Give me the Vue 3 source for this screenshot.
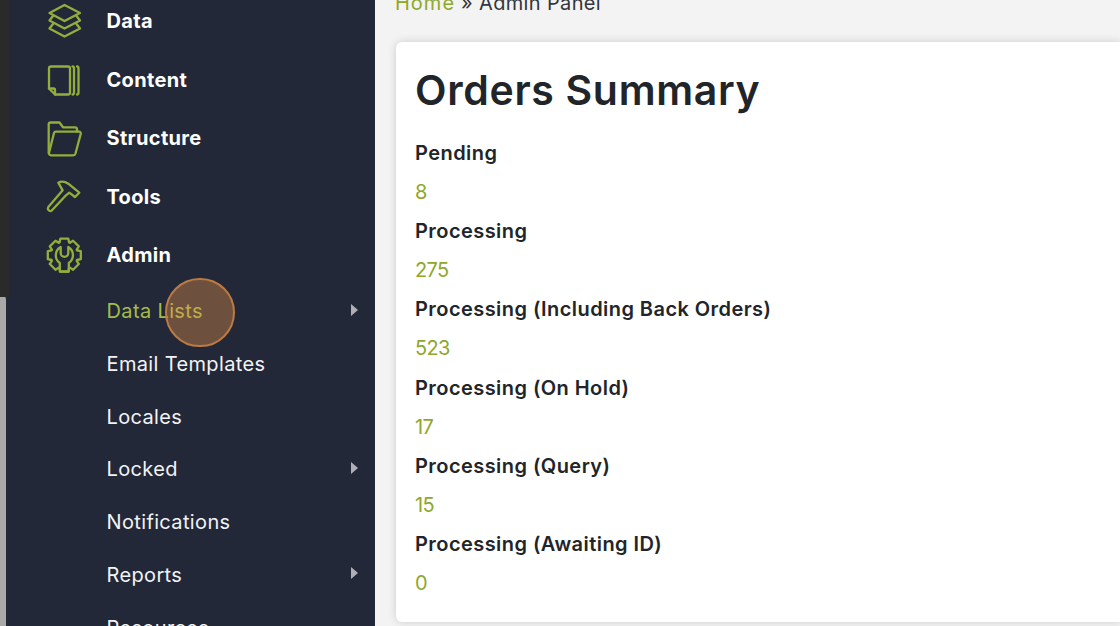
<script setup>
const mainItems = [
  { label: 'Data', icon: 'data' },
  { label: 'Content', icon: 'content' },
  { label: 'Structure', icon: 'structure' },
  { label: 'Tools', icon: 'tools' },
  { label: 'Admin', icon: 'admin' }
]
const subItems = [
  { label: 'Data Lists', arrow: true, active: true },
  { label: 'Email Templates' },
  { label: 'Locales' },
  { label: 'Locked', arrow: true },
  { label: 'Notifications' },
  { label: 'Reports', arrow: true },
  { label: 'Resources' }
]
const stats = [
  ['Pending', '8'],
  ['Processing', '275'],
  ['Processing (Including Back Orders)', '523'],
  ['Processing (On Hold)', '17'],
  ['Processing (Query)', '15'],
  ['Processing (Awaiting ID)', '0']
]
const gearPath = (() => {
  const cx = 20.3, cy = 20.2, ro = 17, ri = 13.6
  const pts = []
  for (let i = 0; i < 8; i++) {
    const a = (i * Math.PI) / 4 - Math.PI / 2
    const w = 0.24, v = 0.36
    for (const [r, d] of [[ri, -v], [ro, -w], [ro, w], [ri, v]]) {
      pts.push([cx + r * Math.cos(a + d), cy + r * Math.sin(a + d)])
    }
  }
  return 'M' + pts.map(p => p[0].toFixed(1) + ' ' + p[1].toFixed(1)).join(' L') + 'Z'
})()
</script>

<template>
  <div class="page">
    <div class="strip"><div class="thumb"></div></div>
    <aside class="sidebar">
      <div class="nav">
        <div v-for="m in mainItems" :key="m.label" class="main-item">
          <svg class="icon" viewBox="0 0 40 40" fill="none" stroke="#92ae3c" stroke-width="2.300" stroke-linejoin="round" stroke-linecap="round">
            <template v-if="m.icon === 'data'">
              <path d="M20.500 4 36 12 20.500 20 5.500 12Z" />
              <path d="M9 15 5.500 19.500 20.500 27.500 36 19.500 32.500 15" />
              <path d="M9 23 5.500 27.500 20.500 35.500 36 27.500 32.500 23" />
            </template>
            <template v-else-if="m.icon === 'content'">
              <path d="M7 6.500H24a2 2 0 0 1 2 2V32.500a2 2 0 0 1-2 2H11L5 28.500V8.500a2 2 0 0 1 2-2Z" />
              <path d="M5 28.500H9.500a1.500 1.500 0 0 1 1.500 1.500V34.500" />
              <path d="M28.500 6.500c1.200 0 1.500 1 1.500 2V32.500c0 1-.3 2-1.500 2" />
              <path d="M33 6.500c1.200 0 1.500 1 1.500 2V32.500c0 1-.3 2-1.500 2" />
            </template>
            <template v-else-if="m.icon === 'structure'">
              <path d="M4.700 35V6.500a2 2 0 0 1 2-2H15.500L19 9.300H31a2 2 0 0 1 2 2V13.500" />
              <path d="M12 13.600H35a1.800 1.800 0 0 1 1.700 2.400L31.500 35.500a2.500 2.500 0 0 1-2.400 1.800H7a2 2 0 0 1-2-2.400L10 15a2 2 0 0 1 2-1.400Z" />
            </template>
            <template v-else-if="m.icon === 'tools'">
              <path d="M14.300 5.700Q19 3 24.300 6.700L35.300 15.700 31 20 25.300 15.700 22 18.300 7.500 33.800A2.600 2.600 0 0 1 4.300 30L18.700 13.300Z" />
            </template>
            <template v-else>
              <path :d="gearPath" />
              <path d="M16.700 12V18a3.800 3.800 0 0 0 7.600 0V12A9.500 9.500 0 0 1 24.800 28V36.500H15.800V28A9.500 9.500 0 0 1 16.700 12Z" />
            </template>
          </svg>
          <span>{{ m.label }}</span>
        </div>
        <div class="subs">
          <div v-for="s in subItems" :key="s.label" class="sub-item" :class="{ active: s.active }">
            <span>{{ s.label }}</span>
            <i v-if="s.arrow" class="arrow"></i>
          </div>
        </div>
      </div>
      <div class="click"></div>
    </aside>
    <main class="content">
      <div class="crumbs"><span class="link">Home</span> » Admin Panel</div>
      <section class="card">
        <h1>Orders Summary</h1>
        <template v-for="s in stats" :key="s[0]">
          <div class="stat-label">{{ s[0] }}</div>
          <div class="stat-value">{{ s[1] }}</div>
        </template>
      </section>
    </main>
  </div>
</template>

<style>
html, body { margin: 0; padding: 0; overflow: hidden; }
</style>

<style scoped>
.page {
  width: 1120px;
  height: 626px;
  display: flex;
  overflow: hidden;
  background: #f3f3f3;
  font-family: Inter, "Liberation Sans", sans-serif;
}
.strip {
  width: 9px;
  flex: none;
  background: #2b2a2b;
  position: relative;
}
.thumb {
  position: absolute;
  left: 0;
  top: 297px;
  width: 6px;
  height: 329px;
  background: #a9a9a9;
  border-right: 3px solid #232838;
  border-top-right-radius: 4px;
}
.sidebar {
  width: 366px;
  flex: none;
  background: #232838;
  position: relative;
  overflow: hidden;
}
.nav {
  margin-top: -8.300px;
}
.main-item {
  height: 58.600px;
  display: flex;
  align-items: center;
  color: #fff;
  font-size: 20px;
  font-weight: 700;
  padding-left: 35px;
  letter-spacing: .33px;
}
.icon {
  width: 40px;
  height: 40px;
  margin-right: 22.500px;
  flex: none;
}
.sub-item {
  height: 52.750px;
  display: flex;
  align-items: center;
  justify-content: space-between;
  padding-left: 97.500px;
  padding-right: 17px;
  color: #f2f3f5;
  font-size: 20px;
  font-weight: 400;
  letter-spacing: .36px;
}
.sub-item.active { color: #a3bc4a; }
.arrow {
  width: 0;
  height: 0;
  margin-bottom: 3px;
  border-left: 7px solid #aeb0b6;
  border-top: 6.500px solid transparent;
  border-bottom: 6.500px solid transparent;
}
.click {
  position: absolute;
  left: 156px;
  top: 277.500px;
  width: 65.500px;
  height: 65.500px;
  border-radius: 50%;
  background: rgba(240, 150, 75, 0.37);
  border: 2.500px solid #bd7a41;
}
.content {
  flex: 1;
  min-width: 0;
  padding-left: 21px;
  margin-top: -7px;
}
.crumbs {
  font-size: 20px;
  color: #33363a;
  line-height: 24px;
  height: 49px;
  letter-spacing: .35px;
  position: relative;
  top: -2px;
  left: -1px;
}
.link { color: #8fa82a; letter-spacing: 1px; }
.card {
  background: #fff;
  border-radius: 6px 0 0 6px;
  box-shadow: 0 0 8px rgba(0, 0, 0, .16);
  height: 580px;
  padding: 0 19px;
  box-sizing: border-box;
}
h1 {
  margin: 0;
  padding-top: 24px;
  font-size: 41px;
  line-height: 48px;
  font-weight: 600;
  color: #212529;
  height: 68px;
  letter-spacing: .67px;
}
.stat-label, .stat-value {
  height: 39.100px;
  line-height: 39.100px;
  font-size: 20px;
}
.stat-label { font-weight: 600; color: #212529; letter-spacing: .44px; }
.stat-value { color: #8fa82a; letter-spacing: -.7px; }
</style>
